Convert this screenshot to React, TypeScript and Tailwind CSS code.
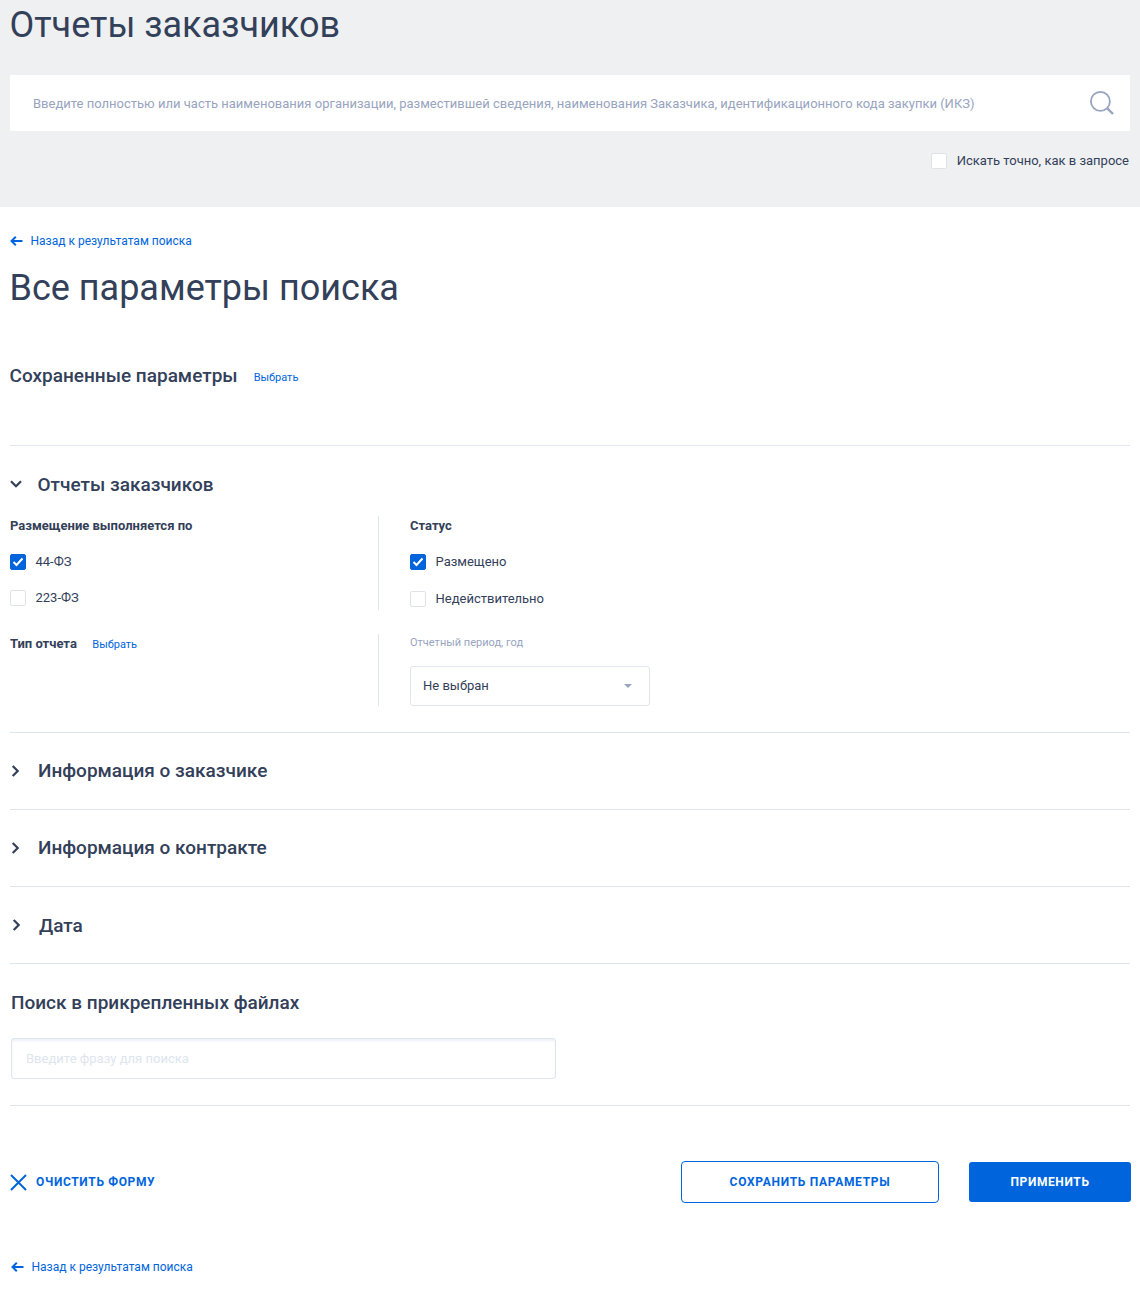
import React from "react";

const BackLink = ({ className }: { className?: string }) => (
  <a className={`flex items-center text-[12px] leading-[16px] text-[#0065dd] ${className ?? ""}`}>
    <svg width="13" height="12" viewBox="0 0 13 12" fill="none" stroke="#0065dd" strokeWidth="2" className="mr-[7.5px]">
      <path d="M12.5 6H1.5M5.8 1.7 1.5 6 5.8 10.3" />
    </svg>
    Назад к результатам поиска
  </a>
);

const Check = ({ checked, label }: { checked?: boolean; label: string }) => (
  <div className="flex items-center h-[16px]">
    <span
      className={`flex items-center justify-center w-[16px] h-[16px] rounded-[2px] mr-[9.5px] border ${
        checked ? "bg-[#0065dd] border-[#0065dd]" : "bg-white border-[#dfe3e8]"
      }`}
    >
      {checked && (
        <svg width="12" height="10" viewBox="0 0 12 10" fill="none" stroke="#fff" strokeWidth="2">
          <path d="M1.5 5 4.5 8 10.5 1.5" />
        </svg>
      )}
    </span>
    <span className="text-[13px] leading-[16px] text-[#334059]">{label}</span>
  </div>
);

const Chevron = ({ down }: { down?: boolean }) => (
  <svg width="12" height="12" viewBox="0 0 12 12" fill="none" stroke="#334059" strokeWidth="2.2" className="shrink-0">
    <path d={down ? "M1 3.2 6 8.2 11 3.2" : "M2.7 1 7.7 6 2.7 11"} />
  </svg>
);

const Collapsed = ({ title, shift }: { title: string; shift?: boolean }) => (
  <div className="flex items-center h-[77px] border-b border-[#dde5ef]">
    <span className={shift ? "ml-[1px]" : "ml-0"}>
      <Chevron />
    </span>
    <h3 className={`ml-[16px] text-[19px] leading-[24px] font-medium text-[#334059] ${shift ? "pt-[2px]" : ""}`}>{title}</h3>
  </div>
);

export default function App() {
  return (
    <div className="w-[1140px] h-[1297px] bg-white font-['Roboto',sans-serif] text-[#334059] overflow-hidden">
      <header className="h-[207px] bg-[#eff0f2] px-[10px] border-b border-[#eceef1]">
        <h1 className="ml-[-0.5px] text-[36px] leading-[50px] text-[#334059]">Отчеты заказчиков</h1>
        <div className="mt-[25px] h-[56px] bg-white flex items-center justify-between pl-[23px] pr-[16px]">
          <span className="pt-[2px] text-[13px] leading-[16px] tracking-[0.007px] text-[#98a4c0]">
            Введите полностью или часть наименования организации, разместившей сведения, наименования Заказчика, идентификационного кода закупки (ИКЗ)
          </span>
          <svg width="24" height="24" viewBox="0 0 24 24" fill="none" stroke="#98a4c0">
            <circle cx="10.4" cy="10.4" r="9.5" strokeWidth="1.8" />
            <path d="M17.3 17.3 23 23" strokeWidth="2.4" />
          </svg>
        </div>
        <div className="mt-[22px] flex justify-end items-center pr-[1px]">
          <span className="w-[16px] h-[16px] rounded-[2px] bg-white border border-[#dfe3e8] mr-[10px]" />
          <span className="text-[13px] leading-[16px]">Искать точно, как в запросе</span>
        </div>
      </header>

      <main className="px-[10px]">
        <BackLink className="mt-[26px]" />
        <h2 className="ml-[-0.5px] mt-[15px] text-[36px] leading-[48px]">Все параметры поиска</h2>

        <div className="mt-[51px] h-[83px] border-b border-[#dde5ef] flex items-start">
          <h3 className="ml-[-0.5px] pt-[1px] text-[19px] leading-[24px] font-medium">Сохраненные параметры</h3>
          <a className="ml-[16px] mt-[7px] text-[11px] leading-[16px] text-[#0065dd]">Выбрать</a>
        </div>

        <section className="h-[287px] pt-[26px] border-b border-[#dde5ef]">
          <div className="flex items-center h-[24px]">
            <Chevron down />
            <h3 className="ml-[15.5px] pt-[2px] text-[19px] leading-[24px] font-medium">Отчеты заказчиков</h3>
          </div>
          <div className="mt-[20px] grid grid-cols-[369px_1fr] grid-rows-[94px_72px] gap-y-[24px]">
            <div className="border-r border-[#dde5ef]">
              <div className="text-[13px] leading-[19px] font-bold">Размещение выполняется по</div>
              <div className="mt-[19px] flex flex-col gap-[20px]">
                <Check checked label="44-ФЗ" />
                <Check label="223-ФЗ" />
              </div>
            </div>
            <div className="pl-[31px]">
              <div className="text-[13px] leading-[19px] font-bold">Статус</div>
              <div className="mt-[19px] flex flex-col gap-[21px]">
                <Check checked label="Размещено" />
                <Check label="Недействительно" />
              </div>
            </div>
            <div className="border-r border-[#dde5ef] flex items-start">
              <div className="text-[13px] leading-[19px] font-bold">Тип отчета</div>
              <a className="ml-[15.5px] mt-[3px] text-[11px] leading-[16px] text-[#0065dd]">Выбрать</a>
            </div>
            <div className="pl-[31px]">
              <div className="pt-[1px] text-[11px] leading-[16px] text-[#98a4c0]">Отчетный период, год</div>
              <div className="mt-[15px] w-[240px] h-[40px] border border-[#dde5ef] rounded-[3px] flex items-center justify-between pl-[12px] pr-[17px]">
                <span className="text-[13px] leading-[16px]">Не выбран</span>
                <span className="w-0 h-0 border-x-[4px] border-x-transparent border-t-[4px] border-t-[#98a4c0]" />
              </div>
            </div>
          </div>
        </section>

        <Collapsed title="Информация о заказчике" />
        <Collapsed title="Информация о контракте" />
        <Collapsed title="Дата" shift />

        <section className="h-[142px] pt-[27px] border-b border-[#dde5ef]">
          <h3 className="ml-[1px] text-[19px] leading-[24px] font-medium">Поиск в прикрепленных файлах</h3>
          <div className="mt-[23px] ml-[1px] w-[545px] h-[41px] border border-[#dde5ef] rounded-[3px] shadow-[inset_0_2px_2px_rgba(221,229,239,0.5)] flex items-center pl-[14px]">
            <span className="text-[13px] leading-[16px] tracking-[0.02px] text-[#dde5ef]">Введите фразу для поиска</span>
          </div>
        </section>

        <div className="mt-[55px] flex items-center">
          <a className="flex items-center text-[12px] leading-[16px] font-bold tracking-[0.65px] text-[#0065dd]">
            <svg width="17" height="17" viewBox="0 0 17 17" fill="none" stroke="#0065dd" strokeWidth="2" className="mr-[9px]">
              <path d="M1 1 16 16M16 1 1 16" />
            </svg>
            ОЧИСТИТЬ ФОРМУ
          </a>
          <button className="ml-auto w-[258px] h-[42px] border border-[#0065dd] rounded-[4px] text-[12px] font-bold tracking-[0.7px] text-[#0065dd]">
            СОХРАНИТЬ ПАРАМЕТРЫ
          </button>
          <button className="ml-[30px] mr-[-1px] w-[162px] h-[40px] bg-[#0065dd] rounded-[3px] text-[12px] font-bold tracking-[0.6px] text-white">
            ПРИМЕНИТЬ
          </button>
        </div>

        <BackLink className="mt-[56px] ml-[1px]" />
      </main>
    </div>
  );
}
